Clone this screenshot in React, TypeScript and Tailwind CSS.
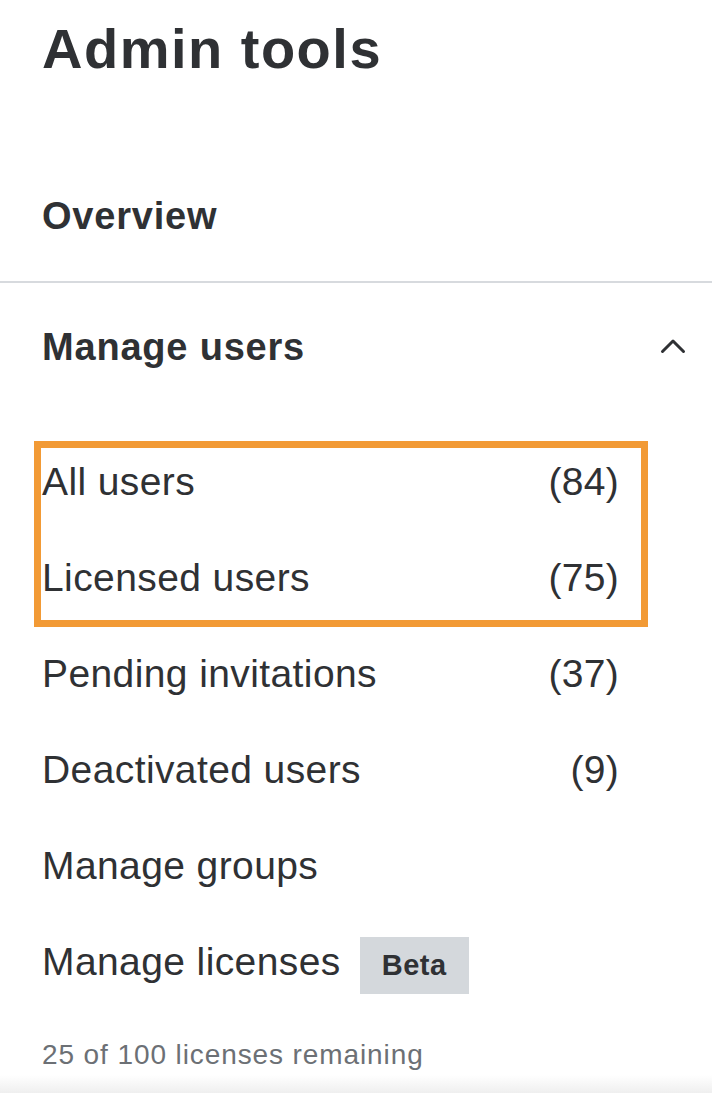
import React from "react";

const rows: { label: string; count?: string; badge?: string }[] = [
  { label: "All users", count: "(84)" },
  { label: "Licensed users", count: "(75)" },
  { label: "Pending invitations", count: "(37)" },
  { label: "Deactivated users", count: "(9)" },
  { label: "Manage groups" },
  { label: "Manage licenses", badge: "Beta" },
];

export default function App() {
  return (
    <div className="relative w-[712px] h-[1093px] overflow-hidden bg-white flex flex-col font-['Liberation_Sans',Arial,sans-serif] text-[#2f3134]">
      <div className="pl-[42px]">
        <h1 className="pt-[17px] text-[56px] leading-[64px] font-bold tracking-[1.5px]">Admin tools</h1>
        <div className="mt-[113px] text-[38px] leading-[44px] font-bold tracking-[0.8px]">Overview</div>
      </div>

      <div className="mt-[43px] h-[2px] w-full bg-[#d7dade]" />

      <div className="mt-[42px] pl-[42px] pr-[26px] flex items-center justify-between h-[44px]">
        <span className="text-[38px] leading-[44px] font-bold tracking-[0.8px]">Manage users</span>
        <svg width="26" height="16" viewBox="0 0 26 16" fill="none" className="mt-[-2px]">
          <path d="M2.5 13.5 L13 3 L23.5 13.5" stroke="#2f3134" strokeWidth="3" strokeLinecap="round" strokeLinejoin="round" />
        </svg>
      </div>

      <div className="mt-[65px] pl-[42px] pr-[93px] flex flex-col">
        {rows.map((r) => (
          <div key={r.label} className="h-[96px] flex items-center justify-between text-[39px] leading-[96px] tracking-[0.4px]">
            <div className="flex items-center">
              <span>{r.label}</span>
              {r.badge && (
                <span className="ml-[19px] mt-[7px] h-[57px] w-[109px] flex items-center justify-center bg-[#d4d8dc] text-[29px] leading-none font-bold tracking-[0.5px]">
                  {r.badge}
                </span>
              )}
            </div>
            {r.count && <span className="tracking-[0.3px]">{r.count}</span>}
          </div>
        ))}
      </div>

      <div className="mt-[25px] pl-[42px] text-[28px] leading-[40px] tracking-[0.9px] text-[#6c7075]">
        25 of 100 licenses remaining
      </div>

      <div className="mt-auto h-[22px] w-full bg-gradient-to-b from-white to-[#efefef]" />

      <div className="absolute left-[34px] top-[441px] w-[614px] h-[186px] border-[7px] border-[#f29a35] pointer-events-none" />
    </div>
  );
}
